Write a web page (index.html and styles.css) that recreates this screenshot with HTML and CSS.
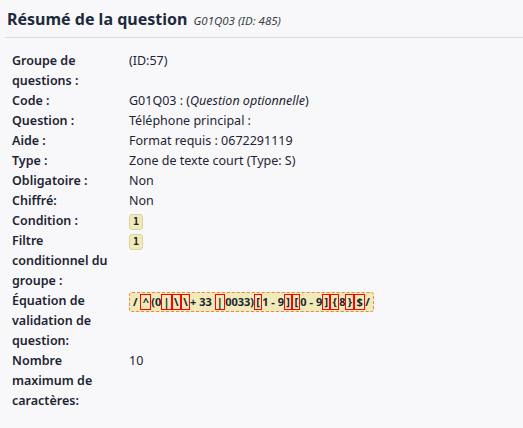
FILE: index.html
```html
<!DOCTYPE html>
<html lang="fr">
<head>
    <meta charset="UTF-8">
    <title>Résumé de la question</title>
    <link rel="stylesheet" href="styles.css">
</head>
<body>
    <div class="summary">
        <h3 class="summary-title">Résumé de la question <small>G01Q03 (ID: 485)</small></h3>

        <table class="summary-table">
            <tr>
                <th>Groupe de questions :</th>
                <td>(ID:57)</td>
            </tr>
            <tr>
                <th>Code :</th>
                <td>G01Q03 : (<em>Question optionnelle</em>)</td>
            </tr>
            <tr>
                <th>Question :</th>
                <td>Téléphone principal :</td>
            </tr>
            <tr>
                <th>Aide :</th>
                <td>Format requis : 0672291119</td>
            </tr>
            <tr>
                <th>Type :</th>
                <td>Zone de texte court (Type: S)</td>
            </tr>
            <tr>
                <th>Obligatoire :</th>
                <td>Non</td>
            </tr>
            <tr>
                <th>Chiffré:</th>
                <td>Non</td>
            </tr>
            <tr>
                <th>Condition :</th>
                <td><span class="em-expr">1</span></td>
            </tr>
            <tr>
                <th>Filtre conditionnel du groupe :</th>
                <td><span class="em-expr">1</span></td>
            </tr>
            <tr>
                <th>Équation de validation de question:</th>
                <td>
                    <span class="em-expr em-error">/ <span class="op">^</span>(0<span class="op">|</span><span class="op">\</span><span class="op">\</span>+ 33 <span class="op">|</span>0033)<span class="op">[</span>1 - 9<span class="op">]</span><span class="op">[</span>0 - 9<span class="op">]</span><span class="op">{</span>8<span class="op">}</span><span class="op">$</span>/</span>
                </td>
            </tr>
            <tr>
                <th>Nombre maximum de caractères:</th>
                <td>10</td>
            </tr>
        </table>
    </div>
</body>
</html>
```

FILE: styles.css
```css
* {
    margin: 0;
    padding: 0;
    box-sizing: border-box;
}

body {
    background: #f8f8fa;
    font-family: "Noto Sans", "Open Sans", sans-serif;
    font-size: 12.5px;
    color: #1e2433;
}

.summary {
    padding: 6px 0 0 5px;
}

.summary-title {
    font-size: 16px;
    font-weight: 700;
    color: #1c2a3c;
    line-height: 26px;
    padding: 0 0 3px 2px;
    border-bottom: 1px solid #d8dbe0;
}

.summary-title small {
    font-size: 11.5px;
    font-weight: 400;
    font-style: italic;
    color: #3a3e46;
    margin-left: 2px;
}

.summary-table {
    border-collapse: collapse;
    margin: 13px 0 0 7px;
}

.summary-table th,
.summary-table td {
    text-align: left;
    vertical-align: top;
    line-height: 20px;
}

.summary-table th {
    width: 117px;
    padding-right: 14px;
    font-weight: 600;
}

.summary-table td {
    font-weight: 400;
}

.em-expr {
    display: inline-block;
    background: #efeab8;
    border: 1px solid #d9d49e;
    border-radius: 3px;
    padding: 0 3px;
    line-height: 14px;
    font-family: "DejaVu Sans Mono", monospace;
    font-size: 10px;
    font-weight: 700;
    vertical-align: middle;
}

.em-error {
    border: 1px dashed #f0844d;
    padding: 1px 3px;
    font-family: "Noto Sans", sans-serif;
    font-size: 11px;
    white-space: nowrap;
}

.op {
    display: inline-block;
    border: 1px solid #f00;
    padding: 0 1.25px;
}
```
